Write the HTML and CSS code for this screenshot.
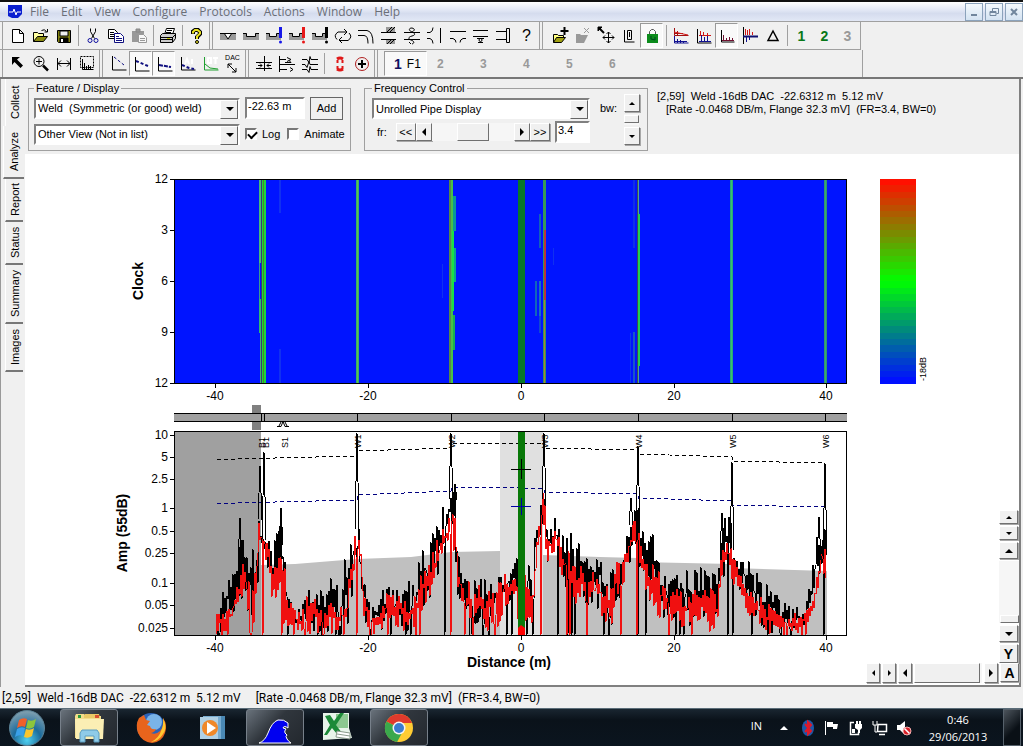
FILE: index.html
```html
<!DOCTYPE html>
<html lang="en">
<head>
    <meta charset="UTF-8">
    <meta name="viewport" content="width=device-width, initial-scale=1.0">
    <title>Pipe Analysis</title>
    <link rel="stylesheet" href="styles.css">
</head>
<body>
    <header class="menubar">
        <svg class="app-icon" viewBox="0 0 14 14"><path d="M0 0h14v9l-4 4H4L0 11z" fill="#0a1fd0"/><path d="M1 7h4l1-3 2 6 1-3h4" stroke="#fff" fill="none"/></svg>
        <nav class="menu">
            <a href="#">File</a>
            <a href="#">Edit</a>
            <a href="#">View</a>
            <a href="#">Configure</a>
            <a href="#">Protocols</a>
            <a href="#">Actions</a>
            <a href="#">Window</a>
            <a href="#">Help</a>
        </nav>
        <div class="window-buttons">
            <button type="button" aria-label="Minimize"><svg viewBox="0 0 16 16"><path d="M5 11h6" stroke-width="2"/></svg></button>
            <button type="button" aria-label="Restore"><svg viewBox="0 0 16 16"><path d="M6.500 7V4.500h6v5h-2M4 7.500h6v4H4zM4 8.500h6"/></svg></button>
            <button type="button" aria-label="Close"><svg viewBox="0 0 16 16"><path d="M5 5l6 6M11 5l-6 6" stroke-width="2"/></svg></button>
        </div>
    </header>

    <div class="toolbars">
        <div class="toolbar">
            <div class="tools tools-first">
                <button type="button" aria-label="New"><svg viewBox="0 0 20 20"><path d="M4.500 3.500h7l4 4v9h-11zM11.500 3.500v4h4" fill="#fff"/></svg></button>
                <button type="button" aria-label="Open"><svg viewBox="0 0 20 20"><path d="M2.500 15.500v-9h4l1 1h5v3" fill="#ffffa0"/><path d="M2.500 15.500l4-5h10l-4 5z" fill="#8a8a10"/><path d="M10.500 4.500q3-2 5 1M16.500 3v3h-3"/></svg></button>
                <button type="button" aria-label="Save"><svg viewBox="0 0 20 20"><path d="M3.500 4.500h13v12h-12l-1-1z" fill="#808010"/><path d="M6 5h8v5H6z" fill="#eee"/><path d="M6 12h8v4H6z" fill="#000"/><path d="M7 13h2v3H7z" fill="#fff" stroke="none"/></svg></button>
                <span class="sep"></span>
                <button type="button" aria-label="Cut"><svg viewBox="0 0 20 20"><path d="M7.500 2.500v3l4 7M12.500 2.500v3l-4 7"/><g stroke="#1010a0"><circle cx="7" cy="14.500" r="2"/><circle cx="13" cy="14.500" r="2"/></g></svg></button>
                <button type="button" aria-label="Copy"><svg viewBox="0 0 20 20"><path d="M2.500 3.500h6l3 3v6h-9z" fill="#fff"/><path d="M4 6.500h4M4 8.500h5M4 10.500h4"/><path d="M8.500 7.500h6l3 3v6h-9z" fill="#fff" stroke="#101080"/><path d="M10 10.500h3M10 12.500h6M10 14.500h6" stroke="#101080"/></svg></button>
                <button type="button" aria-label="Paste" disabled><svg viewBox="0 0 20 20"><path d="M3 5h12v11H3z" fill="#999" stroke="none"/><path d="M7 3h4v3H7z" fill="#999" stroke="#888"/><path d="M9.500 8.500h5l3 3v5h-8z" fill="#f8f8f8" stroke="#999"/><path d="M11 12.500h5M11 14.500h5" stroke="#999"/></svg></button>
                <span class="sep"></span>
                <button type="button" aria-label="Print"><svg viewBox="0 0 20 20"><path d="M6.500 8.500l2-6h8l-2 6z" fill="#fff"/><path d="M9 4.500h5M8 6.500h5"/><path d="M2.500 9.500l2-2h13v5l-3 4h-12z" fill="#ccc"/><path d="M2.500 11.500h12l3-3M2.500 13.500h12M14.500 11v5"/><path d="M9 12.500h3" stroke="#cc0"/></svg></button>
                <span class="sep"></span>
                <button type="button" aria-label="Help"><svg viewBox="0 0 20 20"><path d="M6 8V5.500L8 4h3l2 2v2l-3 3v2" stroke-width="4"/><path d="M6 7.500V6l2-2h2.500L13 6v1.500l-3 3V13" stroke="#e8e020" stroke-width="2"/><circle cx="10" cy="16" r="1.500" fill="#e8e020"/></svg></button>
            </div>
            <div class="tools">
                <button type="button" aria-label="Weld"><svg viewBox="0 0 20 20"><path d="M2 7h16v7H2z" fill="#999" stroke="none"/><path d="M2 7.500h16M6 7l4 6 4-6" fill="#fff"/></svg></button>
                <button type="button" aria-label="Corrosion"><svg viewBox="0 0 20 20"><path d="M2 7h4v4h8V7h4v7H2z" fill="#999" stroke="none"/><path d="M2 7.500h3.500v3h9v-3H18"/></svg></button>
                <button type="button" aria-label="Minor defect"><svg viewBox="0 0 20 20"><path d="M2 7h4v4h7V8h4v6H2z" fill="#999" stroke="none"/><path d="M2 7.500h3.500v3h7v-3h4"/><path d="M16.500 1v11" stroke="#1818e8" stroke-width="3"/><circle cx="16.500" cy="16" r="1.500" fill="#1818e8" stroke="none"/></svg></button>
                <button type="button" aria-label="Major defect"><svg viewBox="0 0 20 20"><path d="M2 7h4v4h7V8h4v6H2z" fill="#999" stroke="none"/><path d="M2 7.500h3.500v3h7v-3h4"/><path d="M16.500 1v11" stroke="#e81818" stroke-width="3"/><circle cx="16.500" cy="16" r="1.500" fill="#e81818" stroke="none"/></svg></button>
                <button type="button" aria-label="Severe defect"><svg viewBox="0 0 20 20"><path d="M2 7h4v4h7V8h4v6H2z" fill="#999" stroke="none"/><path d="M2 7.500h3.500v3h7v-3h4"/><path d="M16.500 1v11" stroke-width="3"/><circle cx="16.500" cy="16" r="1.500" fill="#000" stroke="none"/></svg></button>
                <button type="button" aria-label="Reverberation"><svg viewBox="0 0 20 20"><path d="M4 13.500q-4-4 1-7.500h8M11 3l3 3-3 3M16 7q4 4-1 7.500H7M9 17l-3-3 3-3"/></svg></button>
                <button type="button" aria-label="Bend"><svg viewBox="0 0 20 20"><path d="M2 4.500h9q6 1 6 13M2 9.500h6q4 0 4 8"/></svg></button>
                <button type="button" aria-label="Support"><svg viewBox="0 0 20 20"><path d="M7 1h9v5H7zM7 14h9v4H7z" fill="#999" stroke="none"/><path d="M8 6l5-5M11 6l5-5M8 18l4-4M11 18l4-4M2 6.500h15M2 13.500h15"/></svg></button>
                <button type="button" aria-label="Spiral"><svg viewBox="0 0 20 20"><path d="M2 6.500h16M2 13.500h16M10 2c-4 0-3 3 0 4s4 3 0 4-4 3-1 4 4 3 1 4M10 2c4 1 2 3 0 4M9 18l-2-2"/></svg></button>
                <button type="button" aria-label="Tee"><svg viewBox="0 0 20 20"><path d="M2 6.500h3q3-1 3-5M2 12.500h3q3 1 3 5M15.500 2v15"/></svg></button>
                <button type="button" aria-label="Branch"><svg viewBox="0 0 20 20"><path d="M2 5.500h16M2 12.500h3q3 1 3 4M18 12.500h-3q-3 1-3 4"/></svg></button>
                <button type="button" aria-label="Valve"><svg viewBox="0 0 20 20"><path d="M2 4.500h15M2 10.500h15M6 12.500h7M7 16.500h5"/><circle cx="9.500" cy="14" r="1.500"/></svg></button>
                <button type="button" aria-label="Flange"><svg viewBox="0 0 20 20"><path d="M2 5.500h10M2 13.500h10M12.500 2.500h3v14h-3z"/></svg></button>
                <button type="button" class="glyph plain">?</button>
            </div>
            <div class="tools tools-view">
                <button type="button" aria-label="Add folder"><svg viewBox="0 0 20 20"><path d="M3.500 16.500v-8h4l1 1h5v3" fill="#ffff80"/><path d="M3.500 16.500l3-5h9l-4 5z" fill="#a0a010"/><path d="M14.500 1v8M10.500 5h8" stroke-width="2"/></svg></button>
                <button type="button" aria-label="Remove folder" disabled><svg viewBox="0 0 20 20"><path d="M3 17V8h4l1 1h7l-4 8z" fill="#999" stroke="none"/><path d="M11 2l5 5M16 2l-5 5" stroke="#999"/></svg></button>
                <button type="button" aria-label="Move"><svg viewBox="0 0 20 20"><path d="M2 1h4L2 5z" fill="#000"/><path d="M3 2l5 5" stroke-width="2"/><path d="M12.500 6v11M7 11.500h11M10.500 8l2-2 2 2M10.500 15l2 2 2-2M9 9.500l-2 2 2 2M16 9.500l2 2-2 2"/></svg></button>
                <button type="button" aria-label="Zero"><svg viewBox="0 0 20 20"><path d="M5.500 4v12h10M8.500 4.500h4v9h-4zM10.500 6v5"/></svg></button>
                <button type="button" class="pressed" aria-label="Lock"><svg viewBox="0 0 20 20"><path d="M7.500 8V5.500l2-2h2l2 2V8" stroke="#555"/><path d="M5 8h11v9H5z" fill="#0c8c1c" stroke="none"/><path d="M9 10v3l4 1v-3" stroke="#042"/></svg></button>
                <span class="sep"></span>
                <button type="button" aria-label="Split traces"><svg viewBox="0 0 20 20"><path d="M3.500 2v7.500h14M3 7.500h9M6.500 5v4" stroke="#a01010"/><path d="M3 6l14 3" stroke="#d01818"/><path d="M3.500 10v7h14M6.500 13v4M9.500 14v3M12.500 15v2M4 15.500h12" stroke="#101090"/></svg></button>
                <button type="button" aria-label="Stack traces"><svg viewBox="0 0 20 20"><path d="M3.500 3v14h14"/><path d="M5 9.500h12M6.500 5v4M9.500 6v3M13.500 7v2" stroke="#d01818"/><path d="M5 15.500h12M7.500 9v6M10.500 11v4M13.500 10v5" stroke="#101090"/></svg></button>
                <button type="button" class="pressed" aria-label="Overlay traces"><svg viewBox="0 0 20 20"><path d="M4.500 4v12h13"/><path d="M6.500 9v6M9.500 12v3M12.500 11v4M15.500 12v3M5 14.500h12" stroke="#701030"/></svg></button>
                <button type="button" aria-label="Mirror traces"><svg viewBox="0 0 20 20"><path d="M5.500 3v6M7.500 4v5M9.500 3v6M12.500 6v3" stroke="#d01818"/><path d="M3.500 1v17"/><path d="M3 10.500h15" stroke-width="2" stroke="#101070"/><path d="M6.500 11v5M9.500 11v3" stroke="#101090"/></svg></button>
                <button type="button" aria-label="Delta"><svg viewBox="0 0 20 20"><path d="M10 5l5 9.500H5z" stroke-width="1.500"/></svg></button>
                <span class="sep"></span>
                <button type="button" class="glyph green">1</button>
                <button type="button" class="glyph green">2</button>
                <button type="button" class="glyph" disabled>3</button>
            </div>
        </div>

        <div class="toolbar">
            <div class="tools tools-first">
                <button type="button" aria-label="Select"><svg viewBox="0 0 20 20"><path d="M4 3h8l-3 2.500 6 6-2.500 2.500-6-6L4 11z" fill="#000" stroke="none"/></svg></button>
                <button type="button" aria-label="Zoom"><svg viewBox="0 0 20 20"><circle cx="8" cy="7.500" r="5"/><path d="M8 4.500v6M5 7.500h6"/><path d="M12 11.500l5 5" stroke-width="2.500"/></svg></button>
                <button type="button" aria-label="Distance"><svg viewBox="0 0 20 20"><path d="M3.500 4v12M16.500 4v12M4 9.500h12M7 6.500l-3 3 3 3M13 6.500l3 3-3 3"/></svg></button>
                <button type="button" aria-label="Window region"><svg viewBox="0 0 20 20"><path d="M3.500 2.500h13v11h-13z" stroke-dasharray="2 1"/><path d="M5.500 5v10.500h11M7.500 9v6M9.500 12v3M11.500 11v4M13.500 12v3"/></svg></button>
            </div>
            <div class="tools">
                <button type="button" aria-label="DAC curve"><svg viewBox="0 0 20 20"><path d="M4.500 2v14h14"/><path d="M6 3l10 8" stroke="#101080" stroke-dasharray="3 2"/></svg></button>
                <button type="button" class="pressed" aria-label="Weld curve"><svg viewBox="0 0 20 20"><path d="M4.500 3v14h14"/><path d="M5 7l12 5" stroke="#101080" stroke-width="2" stroke-dasharray="3 2"/></svg></button>
                <button type="button" class="pressed" aria-label="Call curve"><svg viewBox="0 0 20 20"><path d="M4.500 3v14h14"/><path d="M5 11l12 2" stroke="#101080" stroke-width="2" stroke-dasharray="4 1"/></svg></button>
                <button type="button" aria-label="Noise curve"><svg viewBox="0 0 20 20"><path d="M4.500 3v13h14"/><path d="M5 11l7 3 5 1" stroke="#101080" stroke-width="2" stroke-dasharray="3 2"/><path d="M8 10l2-5 2 5M15 5v5" stroke="#fff" stroke-width="2"/></svg></button>
                <button type="button" aria-label="Quick curve"><svg viewBox="0 0 20 20"><path d="M4.500 3v13h14M5 10l5 4 8 1" stroke="#20a030"/><path d="M8 4h3v5H8zM13 4h5M15.500 4v6" stroke="#fff" stroke-width="2"/></svg></button>
                <button type="button" class="dac" aria-label="Set DAC"><span>DAC</span><svg viewBox="0 0 20 12"><path d="M5 2l8 8M5 6V2h4M13 6v4H9"/></svg></button>
            </div>
            <div class="tools">
                <button type="button" aria-label="Centre"><svg viewBox="0 0 20 20"><path d="M2 8.500h16M2 14.500h16M10.500 2v15M4 11.500h4M6 9.500l2 2-2 2M17 11.500h-4M15 9.500l-2 2 2 2"/></svg></button>
                <button type="button" aria-label="Shift"><svg viewBox="0 0 20 20"><path d="M2.500 2v16M2 5.500h7M2 10.500h16M2 15.500h8M8 8.500h6M12 6.500l2 2M13 13.500l3 2-3 2M10 3.500l4 2-4 2"/></svg></button>
                <button type="button" aria-label="Align"><svg viewBox="0 0 20 20"><path d="M2 5.500h5l2 3 1-6 1 3h7M2 10.500h3l2 3 2-6 1 3h8M2 15.500h5l2 3 1-6 1 3h7"/></svg></button>
                <span class="sep"></span>
                <button type="button" aria-label="Ring"><svg viewBox="0 0 20 20"><path d="M8 5q3-2 6 0M8 15q3 2 6 0" stroke="#e01818" stroke-width="3"/><path d="M8.500 6v3M13.500 6v3M8.500 12v3M13.500 12v3" stroke="#e01818" stroke-width="2"/></svg></button>
                <button type="button" aria-label="Target"><svg viewBox="0 0 20 20"><circle cx="10" cy="10" r="6.500" stroke="#b02020"/><path d="M10 6v8M6 10h8" stroke-width="2"/></svg></button>
            </div>
            <div class="tools tools-slots">
                <button type="button" class="slot pressed"><b>1</b> F1</button>
                <button type="button" class="slot" disabled>2</button>
                <button type="button" class="slot" disabled>3</button>
                <button type="button" class="slot" disabled>4</button>
                <button type="button" class="slot" disabled>5</button>
                <button type="button" class="slot" disabled>6</button>
            </div>
        </div>
    </div>

    <main class="workspace">
        <nav class="tabs">
            <button type="button" class="tab tab-collect">Collect</button>
            <button type="button" class="tab tab-analyze active">Analyze</button>
            <button type="button" class="tab">Report</button>
            <button type="button" class="tab">Status</button>
            <button type="button" class="tab tab-summary">Summary</button>
            <button type="button" class="tab">Images</button>
        </nav>

        <div class="panel">
            <form class="controls">
                <fieldset class="group feature">
                    <legend>Feature / Display</legend>
                    <div class="row">
                        <span class="combo"><select aria-label="Feature"><option>Weld&nbsp; (Symmetric (or good) weld)</option></select></span>
                        <input class="field position" type="text" value="-22.63 m" aria-label="Position">
                        <button type="button" class="add">Add</button>
                    </div>
                    <div class="row">
                        <span class="combo"><select aria-label="View"><option>Other View (Not in list)</option></select></span>
                        <label class="check"><input type="checkbox" checked> Log</label>
                        <label class="check"><input type="checkbox"> Animate</label>
                    </div>
                </fieldset>

                <fieldset class="group frequency">
                    <legend>Frequency Control</legend>
                    <div class="frequency-body">
                        <div class="frequency-main">
                            <span class="combo"><select aria-label="Display"><option>Unrolled Pipe Display</option></select></span>
                            <div class="row fr">
                                <label for="fr">fr:</label>
                                <div class="stepper">
                                    <button type="button" class="bevel wide">&lt;&lt;</button>
                                    <button type="button" class="bevel" aria-label="Lower"><i class="arrow left"></i></button>
                                    <input id="fr" class="slider" type="range" min="0" max="100" value="50">
                                    <button type="button" class="bevel" aria-label="Higher"><i class="arrow right"></i></button>
                                    <button type="button" class="bevel wide">&gt;&gt;</button>
                                </div>
                                <input class="field fr-value" type="text" value="3.4" aria-label="Frequency">
                            </div>
                        </div>
                        <label class="bw-label" for="bw">bw:</label>
                        <div class="bw">
                            <button type="button" class="bevel" aria-label="Wider"><i class="arrow up small"></i></button>
                            <input id="bw" class="slider vertical" type="range" min="0" max="100" value="30">
                            <button type="button" class="bevel" aria-label="Narrower"><i class="arrow down small"></i></button>
                        </div>
                    </div>
                </fieldset>

                <div class="readout">
                    <p>[2,59]&nbsp; Weld -16dB DAC&nbsp; -22.6312 m&nbsp; 5.12 mV</p>
                    <p class="rate">[Rate -0.0468 DB/m, Flange 32.3 mV]&nbsp; (FR=3.4, BW=0)</p>
                </div>
            </form>

            <div class="plot">
                <svg class="chart" id="chart" viewBox="25 154 994 530">
                    <!-- unrolled pipe -->
                    <rect x="174" y="179" width="673" height="205" fill="#0014ff"/>
                    <g id="pipeMap" shape-rendering="crispEdges"></g>
                    <path class="axis" d="M174.500 383.500V179.500h672v204z"/>
                    <g id="colorBar" shape-rendering="crispEdges"></g>
                    <text class="tiny" transform="translate(926 381) rotate(-90)">-18dB</text>
                    <text class="title" text-anchor="middle" transform="translate(143 281) rotate(-90)">Clock</text>

                    <!-- pipe strip -->
                    <rect x="252" y="405" width="9" height="25" fill="#808080"/>
                    <rect x="174" y="413" width="673" height="9" fill="#a0a0a0"/>
                    <path class="axis" d="M174 413.500h673M174 421.500h673M261.500 413v9M264.500 413v9M357.500 413v9M451.500 413v9M544.500 413v9M638.500 413v9M732.500 413v9M825.500 413v9"/>
                    <path d="M277 426.500h4l2-5 2 5h4M279 426l2-4M287 426l-2-4" fill="none" stroke="#000"/>

                    <!-- amplitude -->
                    <rect x="174" y="432" width="87" height="203" fill="#a0a0a0"/>
                    <path d="M261 635V565l34-1 62-5 54-2 40-5 49-1v84zM543 635v-80l57 2 38 1v4l94 2v4l95 3v64z" fill="#c0c0c0"/>
                    <rect x="500" y="432" width="43" height="203" fill="#e0e0e0"/>
                    <path class="dac-line" d="M217 459.500l78-2 62-1.500v-5l94-3v-4l93-1v5l94 2v4l94 3v4l93 2"/>
                    <path class="dac-line call" d="M217 503.500l78-2 62-1.500v-5l94-4v-3l49-1 44 2v3l94 2v4l94 3v4l93 2"/>
                    <path id="blackTrace" class="trace"/>
                    <path id="redTrace" class="trace red"/>
                    <path id="peaks" class="trace"/>
                    <rect x="518" y="432" width="7" height="203" fill="#087808"/>
                    <path d="M518 635v-7l3-3 4 3v7z" fill="#f00"/>
                    <path d="M511 469.500h20M521.500 459v20" stroke="#000"/>
                    <path d="M511 506.500h20M521.500 498v17" stroke="#0000a8"/>
                    <path class="axis" d="M174.500 635.500V431.500h672v204z"/>
                    <g id="marks"></g>
                    <g id="scales"></g>
                    <text class="title" text-anchor="middle" transform="translate(127 533) rotate(-90)">Amp (55dB)</text>
                    <text class="title" text-anchor="middle" x="509" y="667">Distance (m)</text>
                </svg>

                <div class="vscroll">
                    <button type="button" class="bevel short" aria-label="Up"><i class="arrow up small"></i></button>
                    <button type="button" class="bevel short" aria-label="Down"><i class="arrow down small"></i></button>
                    <button type="button" class="bevel" aria-label="Scale up"><i class="arrow up"></i></button>
                    <input class="slider vertical" type="range" min="0" max="100" value="100" aria-label="Vertical scale">
                    <button type="button" class="bevel" aria-label="Scale down"><i class="arrow down"></i></button>
                    <button type="button" class="bevel letter">Y</button>
                </div>
                <div class="hscroll">
                    <button type="button" class="bevel" aria-label="Left"><i class="arrow left small"></i></button>
                    <button type="button" class="bevel" aria-label="Right"><i class="arrow right small"></i></button>
                    <button type="button" class="bevel" aria-label="Scroll left"><i class="arrow left"></i></button>
                    <input class="slider" type="range" min="0" max="100" value="0" aria-label="Horizontal scroll">
                    <button type="button" class="bevel" aria-label="Scroll right"><i class="arrow right"></i></button>
                    <button type="button" class="bevel letter">A</button>
                </div>
            </div>
        </div>
    </main>

    <footer class="statusbar">
        <span>[2,59]&nbsp; Weld -16dB DAC&nbsp; -22.6312 m&nbsp; 5.12 mV</span>
        <span>[Rate -0.0468 DB/m, Flange 32.3 mV]&nbsp; (FR=3.4, BW=0)</span>
    </footer>

    <div class="taskbar">
        <button type="button" class="start" aria-label="Start">
            <svg viewBox="0 0 38 38">
                <defs>
                    <radialGradient id="orb" cx=".5" cy=".85" r=".8"><stop offset="0" stop-color="#4fd0f0"/><stop offset=".5" stop-color="#1c6c9c"/><stop offset="1" stop-color="#7a9cae"/></radialGradient>
                </defs>
                <circle cx="19" cy="19" r="17.500" fill="url(#orb)" stroke="#5b8296"/>
                <path d="M11 11q4-3 8-1l-2 8q-4-2-8 1z" fill="#f0602a"/>
                <path d="M20 11q4 2 8-1l-2 8q-4 3-8 1z" fill="#8cc63c"/>
                <path d="M9 20q4-3 8-1l-2 8q-4-2-8 1z" fill="#3aa0e8"/>
                <path d="M18 20q4 2 8-1l-2 8q-4 3-8 1z" fill="#fbc62c"/>
            </svg>
        </button>
        <div class="apps">
            <button type="button" class="app open" aria-label="Explorer">
                <svg viewBox="0 0 34 34"><path d="M3 5l1-2h8l2 2h15v22H3z" fill="#f3dc8a"/><path d="M12 5l1-2h14l1 4H12z" fill="#e9c865"/><path d="M3 8h29l-1 20H4z" fill="#fbeeb4"/><path d="M6 4h3v3H6z" fill="#2a9a3c"/><path d="M23 4h4v3h-4z" fill="#d85030"/><path d="M8 31v-9l2-3h15l2 3v9h-5v-6h-9v6z" fill="#8fcbe8" stroke="#5a9cc0"/></svg>
            </button>
            <button type="button" class="app" aria-label="Firefox">
                <svg viewBox="0 0 34 34"><circle cx="17" cy="16" r="14" fill="#2a62b8"/><circle cx="20" cy="11" r="8" fill="#7ab4e8"/><path d="M5 7q-4 7-1 15 4 9 14 10 10-1 13-10 3-8-2-15 1 9-3 13-4 4-9 2 4-1 5-4-5 1-6-3l-3-1 3-4-4-1-2-5z" fill="#e8641c"/><path d="M29 7q5 10 0 16-4 7-12 8 8-4 10-11 3-6 2-13z" fill="#ffc830"/></svg>
            </button>
            <button type="button" class="app" aria-label="Media Player">
                <svg viewBox="0 0 34 34"><path d="M10 5h19v23H10z" fill="#4a88b4"/><path d="M7 5h18v23H7z" fill="#78acd0"/><path d="M4 6h18v22H4z" fill="#b0d0e4"/><circle cx="14" cy="17" r="8" fill="#f08828"/><path d="M11 11l9 6-9 6z" fill="#fff"/></svg>
            </button>
            <button type="button" class="app open" aria-label="Wave">
                <svg viewBox="0 0 34 34"><path d="M1 32q6-2 9-10 4-11 10-13 6-1 10 3v5q-4-3-5 0l3 1q-2 2-1 4l2 2q-2 1 0 4 2 3 4 4z" fill="#0000f0" stroke="#fff"/></svg>
            </button>
            <button type="button" class="app" aria-label="Excel">
                <svg viewBox="0 0 34 34"><path d="M3 2h26v15l3 10-29 2z" fill="#e8f4ea"/><path d="M16 3h12v14H16z" fill="#8cc890"/><path d="M5 5l5-1 4 6 6-8h4l-8 12 6 8-5 1-5-6-5 7H4l6-10z" fill="#1c8a38"/><path d="M17 20l13 2v6l-14-2zM17 23l13 2" fill="#fff" stroke="#8a9a8c"/></svg>
            </button>
            <button type="button" class="app open" aria-label="Chrome">
                <svg viewBox="0 0 34 34"><circle cx="17" cy="17" r="14" fill="#fc3"/><path d="M17 17L4.500 10.500A14 14 0 0 1 30 12H17z" fill="#e03a2c"/><path d="M17 17l-12.500-6.500A14 14 0 0 0 15 31l5-9z" fill="#3aa84c"/><circle cx="17" cy="17" r="6.500" fill="#f4f4f4"/><circle cx="17" cy="17" r="5" fill="#3a7cd0"/></svg>
            </button>
        </div>
        <div class="tray">
            <span class="lang">IN</span>
            <svg viewBox="0 0 18 18"><path d="M5 11l4-4 4 4z" fill="#fff"/></svg>
            <svg viewBox="0 0 18 18"><ellipse cx="9" cy="9" rx="6" ry="8" fill="#1c58a8"/><path d="M6 5l6 7-3 3V3l3 3-6 7" stroke="#e01828" stroke-width="2" fill="none"/></svg>
            <svg viewBox="0 0 18 18"><path d="M2.500 2v14" stroke="#fff"/><path d="M4 3h6v5H4zM10 5h5l-1 5h-4z" fill="#fff"/></svg>
            <svg viewBox="0 0 18 18"><path d="M7 3.500H3.500v12h8V13" stroke="#fff" stroke-width="1.500" fill="none"/><path d="M8 5h7v4l-2 2v3h-2v-3L8 9zM9 2h2v3H9zM12 2h2v3h-2zM5 10h3v4H5z" fill="#fff"/></svg>
            <svg viewBox="0 0 18 18"><path d="M7 5.500h8.500v7H6.500zM8 15.500h6" stroke="#fff" stroke-width="1.500" fill="none"/><path d="M2 2v4h4V2M4 6v7h2" stroke="#fff" fill="none"/></svg>
            <svg viewBox="0 0 18 18"><path d="M2 6h3l5-4v14l-5-5H2z" fill="#fff"/><circle cx="12" cy="12" r="4" fill="#d82028" stroke="#f4b0b0"/><path d="M9.500 9.500l5 5" stroke="#fff" stroke-width="1.500"/></svg>
        </div>
        <div class="clock"><span>0:46</span><span>29/06/2013</span></div>
        <button type="button" class="show-desktop" aria-label="Show desktop"></button>
    </div>

    <script src="chart.js"></script>
</body>
</html>
```

FILE: styles.css
```css
* {
    box-sizing: border-box;
}
body {
    margin: 0;
    min-height: 100vh;
    display: flex;
    flex-direction: column;
    background: #f0f0f0;
    color: #000;
    font-family: "Liberation Sans", Arial, sans-serif;
    font-size: 11px;
}
button, input, select {
    font: inherit;
    color: inherit;
    margin: 0;
    padding: 0;
}

/* menu */
.menubar {
    display: flex;
    align-items: center;
    height: 22px;
    padding-left: 8px;
    border-top: 2px solid #111;
    border-bottom: 1px solid #a0a0a0;
    background: linear-gradient(#fff, #e4e9f6 40%, #d5dcee 60%, #e2e8f6);
    font-family: "Open Sans", "Noto Sans", sans-serif;
    font-size: 12px;
}
.app-icon {
    width: 14px;
    height: 14px;
    margin-right: 8px;
}
.menu {
    display: flex;
    gap: 12px;
    flex: 1;
}
.menu a {
    color: #6b6f78;
    text-decoration: none;
}
.window-buttons {
    display: flex;
    gap: 2px;
}
.window-buttons button {
    width: 18px;
    height: 18px;
    border: 1px solid #8ba2bb;
    background: linear-gradient(#f4f9fd, #d4e3f2);
}
.window-buttons svg {
    display: block;
    width: 16px;
    height: 16px;
    fill: none;
    stroke: #71869d;
}

/* toolbars */
.toolbars {
    border-bottom: 2px solid #777;
}
.toolbar {
    display: flex;
    width: max-content;
    height: 28px;
    border-bottom: 1px solid #a0a0a0;
}
.toolbar:last-child {
    height: 27px;
    border-bottom: none;
}
.tools {
    display: flex;
    align-items: center;
    padding: 0 1px 0 3px;
    margin-left: 2px;
    border-left: 1px solid #a0a0a0;
    border-right: 1px solid #a0a0a0;
}
.tools-first {
    margin-left: 2px;
}
.tools-view {
    padding-left: 5px;
}
.tools-slots {
    padding: 0 220px 0 6px;
}
.tools button {
    display: flex;
    align-items: center;
    justify-content: center;
    width: 23px;
    height: 25px;
    border: 1px solid transparent;
    background: none;
}
.tools button.pressed {
    border-color: #999 #fff #fff #999;
    background: #f9f9f9;
}
.tools svg {
    flex: none;
    width: 20px;
    height: 20px;
    fill: none;
    stroke: #000;
}
.tools .glyph {
    font-size: 14px;
    font-weight: bold;
}
.tools .plain {
    font-size: 16px;
    font-weight: normal;
}
.tools .green {
    color: #087818;
}
.tools button:disabled {
    color: #999;
}
.tools .slot {
    width: 43px;
    justify-content: flex-start;
    padding-left: 9px;
    gap: 5px;
    font-size: 12px;
}
.tools .slot:disabled {
    font-weight: bold;
}
.slot b {
    color: #101060;
    font-size: 14px;
}
.tools .dac {
    flex-direction: column;
    font-size: 7px;
    line-height: 8px;
}
.tools .dac svg {
    height: 12px;
}
.sep {
    width: 1px;
    height: 21px;
    margin: 0 2px 0 3px;
    background: #a0a0a0;
}

/* side tabs */
.workspace {
    flex: 1;
    display: flex;
    padding-right: 2px;
}
.tabs {
    display: flex;
    flex-direction: column;
    width: 25px;
    padding-left: 1px;
    border-left: 1px solid #999;
}
.tab {
    writing-mode: vertical-rl;
    transform: rotate(180deg);
    width: 18px;
    height: 43px;
    margin-left: 3px;
    border: none;
    border-top: 2px solid #777;
    border-right: 1px solid #fff;
    background: #f0f0f0;
    text-align: center;
}
.tab-collect {
    height: 47px;
    border-top: none;
}
.tab-analyze {
    height: 53px;
}
.tab-summary {
    height: 59px;
}
.tab:last-child {
    height: 48px;
}
.tab.active {
    width: 21px;
    margin-left: 1px;
}

/* controls strip */
.panel {
    flex: 1;
    display: flex;
    flex-direction: column;
    border-right: 2px solid #808080;
    border-bottom: 2px solid #808080;
}
.controls {
    display: flex;
    align-items: flex-start;
    padding: 3px;
}
.group {
    flex: none;
    min-width: 0;
    height: 69px;
    margin: 0;
    padding: 1px 5px 0;
    border: 1px solid #a0a0a0;
}
.group legend {
    padding: 0 2px;
    line-height: 13px;
}
.feature {
    width: 323px;
    margin-right: 13px;
}
.row {
    display: flex;
    align-items: center;
    gap: 5px;
}
.feature .row {
    height: 24px;
    margin-bottom: 2px;
}
.combo {
    position: relative;
    display: block;
    width: 206px;
    height: 21px;
    flex: none;
}
.combo select {
    appearance: none;
    display: block;
    width: 100%;
    height: 100%;
    padding-left: 2px;
    border: 2px solid;
    border-color: #808080 #fff #fff #808080;
    border-radius: 0;
    background: #fff;
}
.combo::before {
    content: "";
    position: absolute;
    right: 2px;
    top: 2px;
    width: 16px;
    height: 17px;
    border: 1px solid;
    border-color: #fff #666 #666 #fff;
    background: #f0f0f0;
    pointer-events: none;
}
.combo::after {
    content: "";
    position: absolute;
    right: 6px;
    top: 9px;
    border: 4px solid transparent;
    border-top-color: #000;
    border-bottom: none;
    pointer-events: none;
}
.field {
    flex: none;
    height: 22px;
    padding: 0 2px 4px 1px;
    border: 2px solid;
    border-color: #808080 #fff #fff #808080;
    background: #fff;
}
.position {
    width: 60px;
}
.add {
    width: 33px;
    height: 23px;
    border: 1px solid #666;
    background: #f0f0f0;
}
.check {
    display: flex;
    align-items: center;
    gap: 5px;
    margin-right: 2px;
}
.check input {
    appearance: none;
    width: 12px;
    height: 12px;
    border: 2px solid;
    border-color: #777 #fff #fff #777;
    background: #fff;
}
.check input:checked::before {
    content: "";
    display: block;
    width: 7px;
    height: 4px;
    margin: 1px;
    border: solid #000;
    border-width: 0 0 2px 2px;
    transform: rotate(-45deg);
}
.frequency {
    width: 284px;
    padding-left: 7px;
}
.frequency-body {
    display: flex;
}
.frequency-main {
    width: 218px;
    padding-top: 2px;
}
.frequency .combo {
    width: 218px;
    margin-bottom: 2px;
}
.fr {
    padding-left: 5px;
}
.stepper {
    display: flex;
    flex: 1;
    min-width: 0;
    margin-left: 4px;
}
.fr-value {
    width: 35px;
}
.bw-label {
    width: 34px;
    padding: 6px 0 0 10px;
}
.bw {
    display: flex;
    flex-direction: column;
    align-items: center;
    gap: 2px;
    width: 15px;
    height: 51px;
    margin-top: -2px;
}
.bevel {
    display: flex;
    align-items: center;
    justify-content: center;
    flex: none;
    width: 16px;
    height: 18px;
    border: 1px solid;
    border-color: #fff #707070 #707070 #fff;
    background: #f0f0f0;
    box-shadow: 1px 1px 0 #a8a8a8;
}
.bevel.wide {
    width: 20px;
}
.arrow {
    border: 4px solid transparent;
}
.arrow.small {
    border-width: 3px;
}
.arrow.left {
    border-right-color: #000;
    border-left: none;
}
.arrow.right {
    border-left-color: #000;
    border-right: none;
}
.arrow.up {
    border-bottom-color: #000;
    border-top: none;
}
.arrow.down {
    border-top-color: #000;
    border-bottom: none;
}
.slider {
    appearance: none;
    flex: 1;
    min-width: 0;
    height: 18px;
    background: #f6f6f6;
}
.slider::-webkit-slider-thumb {
    appearance: none;
    width: 32px;
    height: 18px;
    border: 1px solid;
    border-color: #fff #707070 #707070 #fff;
    background: #f0f0f0;
}
.slider.vertical {
    writing-mode: vertical-lr;
    width: 100%;
    height: auto;
    min-height: 0;
}
.slider.vertical::-webkit-slider-thumb {
    width: 19px;
    height: 8px;
}
.bw .slider.vertical::-webkit-slider-thumb {
    width: 15px;
}
.readout {
    padding: 8px 0 0 9px;
}
.readout p {
    margin: 0;
    line-height: 13px;
}
.readout .rate {
    padding-left: 9px;
}

/* plot */
.plot {
    flex: 1;
    display: grid;
    grid-template-columns: 1fr 20px;
    grid-template-rows: 1fr 22px;
    background: #fff;
}
.chart {
    grid-area: 1 / 1 / 3 / 3;
    display: block;
    width: 100%;
    height: auto;
}
.chart text {
    font-family: "Liberation Sans", Arial, sans-serif;
    font-size: 12px;
}
.chart .title {
    font-size: 14px;
    font-weight: bold;
}
.chart .tiny {
    font-size: 9px;
}
.axis {
    fill: none;
    stroke: #000;
    shape-rendering: crispEdges;
}
.dac-line {
    fill: none;
    stroke: #000;
    stroke-dasharray: 4 3;
    shape-rendering: crispEdges;
}
.dac-line.call {
    stroke: #000080;
}
.trace {
    fill: none;
    stroke: #000;
    stroke-linejoin: bevel;
    shape-rendering: crispEdges;
}
.trace.red {
    stroke: #f01010;
}
.vscroll {
    grid-area: 1 / 2;
    align-self: end;
    display: flex;
    flex-direction: column;
    gap: 2px;
    height: 153px;
}
.vscroll .bevel {
    width: 19px;
    height: 17px;
}
.vscroll .bevel.short {
    height: 14px;
}
.hscroll {
    grid-area: 2 / 1 / 3 / 3;
    justify-self: end;
    display: flex;
    gap: 2px;
    width: 153px;
}
.hscroll .bevel {
    width: 14px;
    height: 20px;
}
.hscroll .slider {
    height: 20px;
}
.hscroll .slider::-webkit-slider-thumb {
    width: 66px;
    height: 20px;
}
.plot .letter {
    width: 19px;
    height: 19px;
    font-size: 14px;
    font-weight: bold;
}

/* status and taskbar */
.statusbar {
    display: flex;
    align-items: center;
    gap: 15px;
    height: 21px;
    padding: 0 2px;
    font-family: Roboto, "Noto Sans", sans-serif;
    font-size: 12px;
}
.taskbar {
    display: flex;
    align-items: stretch;
    height: 38px;
    padding-right: 2px;
    border-top: 1px solid #5a6c78;
    background: linear-gradient(#1a2631, #0a121a 30%, #0b151f);
    color: #fff;
    font-family: "Open Sans", "Noto Sans", sans-serif;
    font-size: 11px;
}
.taskbar button {
    border: none;
    background: none;
}
.start {
    width: 60px;
    padding-left: 8px;
    text-align: left;
}
.start svg {
    display: block;
    width: 38px;
    height: 38px;
}
.apps {
    display: flex;
    gap: 4px;
    flex: 1;
}
.taskbar .app {
    display: flex;
    align-items: center;
    justify-content: center;
    width: 58px;
}
.taskbar .app.open {
    border: 1px solid #77808a;
    border-radius: 3px;
    background: linear-gradient(135deg, #69727b, #30363d 45%, #23282e);
}
.app svg {
    width: 34px;
    height: 34px;
}
.tray {
    display: flex;
    align-items: center;
    gap: 6px;
}
.tray .lang {
    margin: 0 7px 4px 0;
}
.tray svg {
    width: 18px;
    height: 18px;
}
.clock {
    display: flex;
    flex-direction: column;
    align-items: center;
    justify-content: center;
    width: 90px;
    line-height: 17px;
}
.taskbar .show-desktop {
    width: 18px;
    border: 1px solid #56616b;
    background: linear-gradient(135deg, #4c545c, #0a1016 60%);
}
```

FILE: chart.js
```js
const SVG = 'http://www.w3.org/2000/svg';

function add(parent, name, attrs, text) {
    const el = document.createElementNS(SVG, name);
    for (const key in attrs) el.setAttribute(key, attrs[key]);
    if (text !== undefined) el.textContent = text;
    document.getElementById(parent).appendChild(el);
}

// axis scales
[['12', 179], ['3', 230], ['6', 281], ['9', 332], ['12', 383],
 ['10', 435], ['5', 457], ['2.5', 479], ['1', 508], ['0.5', 531],
 ['0.25', 553], ['0.1', 583], ['0.05', 605], ['0.025', 628]].forEach(([label, y]) => {
    add('scales', 'text', { x: 168, y: y + 4, 'text-anchor': 'end' }, label);
    add('scales', 'path', { d: `M170 ${y}.500h4`, class: 'axis' });
});
[['-40', 215], ['-20', 368], ['0', 521], ['20', 674], ['40', 826]].forEach(([label, x]) => {
    [384, 636].forEach(y => {
        add('scales', 'path', { d: `M${x}.500 ${y}v4`, class: 'axis' });
        add('scales', 'text', { x: x, y: y + 16, 'text-anchor': 'middle' }, label);
    });
});
[['B1', 265], ['B1', 269], ['S1', 288], ['W1', 361], ['W2', 455], ['W3', 548],
 ['W4', 642], ['W5', 736], ['W6', 829]].forEach(([label, x]) => {
    add('marks', 'text', { class: 'tiny', transform: `translate(${x} 448) rotate(-90)` }, label);
});

// colour scale, 32 bands
for (let i = 0; i < 32; i++) {
    const t = i / 31 * 2;
    const top = Math.round(179 + i * 6.4);
    const color = t < 1
        ? `rgb(${Math.round(255 * (1 - t))},${Math.round(16 + 239 * t)},0)`
        : `rgb(0,${Math.round(255 - 239 * (t - 1))},${Math.round(255 * (t - 1))})`;
    add('colorBar', 'rect', { x: 880, y: top, width: 36, height: Math.round(179 + (i + 1) * 6.4) - top, fill: color });
}

// reflections on the unrolled pipe: x, y, width, height, colour
[[259, 179, 2, 84, '#46b878'], [259, 263, 1, 36, '#3a9a90'], [259, 299, 2, 34, '#30b870'], [260, 333, 1, 51, '#40b070'],
 [261, 179, 1, 205, '#383878'], [262, 179, 4, 205, '#18d838'], [263, 179, 1, 205, '#508030'],
 [279, 179, 2, 34, '#1030f0'], [279, 349, 2, 34, '#1030f0'],
 [356, 179, 3, 205, '#38b068'], [357, 179, 1, 205, '#60c050'],
 [449, 179, 2, 205, '#588848'], [451, 179, 2, 205, '#48c048'], [453, 196, 3, 35, '#089898'], [453, 248, 3, 34, '#08a888'],
 [452, 231, 2, 80, '#18e048'], [453, 315, 2, 35, '#18b050'], [442, 264, 1, 34, '#1030f0'],
 [518, 179, 7, 205, '#087828'],
 [539, 214, 2, 34, '#1060b8'], [535, 281, 2, 35, '#1068b8'], [539, 281, 2, 35, '#1870c0'], [539, 316, 2, 17, '#1048d0'],
 [543, 179, 3, 205, '#389858'], [544, 230, 2, 70, '#b83838'], [544, 300, 1, 84, '#b08030'],
 [553, 248, 1, 17, '#1030f0'], [633, 179, 2, 69, '#1030e8'],
 [637, 179, 1, 205, '#404858'], [638, 179, 1, 205, '#48a898'], [638, 214, 2, 152, '#20d050'],
 [630, 333, 1, 51, '#1038e8'], [633, 332, 2, 52, '#1858c8'],
 [730, 179, 3, 205, '#28a878'], [731, 179, 1, 205, '#38c070'],
 [824, 179, 3, 205, '#389070'], [825, 179, 1, 205, '#30b070']].forEach(([x, y, width, height, fill]) => {
    add('pipeMap', 'rect', { x, y, width, height, fill });
});

// amplitude envelope: x, black top, red top, bottom
const envelope = [
    [215, 618, 612, 635], [222, 592, 612, 635], [230, 562, 598, 635], [236, 558, 590, 620], [240, 530, 570, 600],
    [245, 536, 558, 600], [250, 545, 575, 635], [255, 530, 545, 635], [259, 505, 515, 580], [263, 530, 525, 550],
    [268, 530, 540, 570], [272, 545, 555, 600], [276, 530, 570, 610], [281, 508, 545, 600], [285, 527, 560, 635],
    [288, 590, 600, 635], [300, 608, 610, 635], [308, 588, 590, 635], [315, 588, 590, 635], [325, 590, 600, 635],
    [333, 571, 600, 635], [340, 560, 605, 635], [347, 553, 585, 635], [353, 530, 545, 590], [357, 500, 516, 550],
    [360, 540, 540, 570], [364, 580, 590, 620], [370, 598, 605, 635], [378, 602, 615, 635], [386, 580, 590, 635],
    [395, 588, 592, 625], [405, 580, 592, 635], [415, 565, 590, 635], [425, 545, 565, 610], [435, 530, 545, 590],
    [443, 505, 525, 560], [448, 500, 510, 560], [451, 480, 490, 530], [455, 485, 490, 560], [458, 550, 560, 600],
    [465, 575, 580, 620], [475, 572, 578, 625], [485, 578, 590, 630], [495, 570, 575, 635], [505, 565, 570, 610],
    [513, 552, 575, 600], [520, 560, 570, 635], [528, 548, 575, 620], [532, 552, 600, 635], [536, 515, 550, 580],
    [541, 495, 495, 540], [544, 485, 490, 530], [548, 530, 530, 570], [552, 520, 530, 560], [556, 515, 520, 555],
    [562, 532, 540, 580], [572, 532, 555, 600], [582, 545, 565, 610], [592, 560, 570, 610], [600, 550, 575, 610],
    [608, 575, 585, 635], [615, 555, 565, 620], [622, 542, 550, 590], [628, 530, 530, 570], [631, 498, 520, 570],
    [635, 494, 520, 550], [638, 500, 520, 550], [641, 520, 530, 580], [645, 523, 560, 590], [652, 530, 560, 610],
    [660, 560, 570, 620], [668, 575, 580, 620], [676, 568, 585, 625], [690, 568, 590, 630], [700, 563, 585, 620],
    [710, 572, 588, 635], [717, 570, 590, 635], [722, 515, 550, 580], [728, 515, 540, 570], [732, 520, 550, 580],
    [735, 545, 560, 590], [742, 550, 575, 600], [753, 565, 590, 625], [765, 580, 600, 635], [778, 592, 612, 635],
    [788, 605, 615, 635], [798, 605, 612, 635], [808, 590, 605, 635], [814, 560, 590, 610], [818, 518, 570, 590],
    [822, 545, 545, 570], [825, 520, 545, 580], [827, 515, 560, 585]
];

let seed = 59;
function random() {
    seed = (seed * 16807) % 2147483647;
    return seed / 2147483647;
}

// swings between the upper and lower half of the envelope
function trace(column, dropout) {
    let d = '';
    let i = 0;
    for (let x = 216; x <= 826; x++) {
        while (envelope[i + 1][0] < x) i++;
        const a = envelope[i];
        const b = envelope[i + 1];
        const t = (x - a[0]) / (b[0] - a[0]);
        const top = a[column] + (b[column] - a[column]) * t;
        const bottom = a[3] + (b[3] - a[3]) * t;
        const swing = x % 2 ? random() * 0.5 : 1 - random() * 0.6;
        let y = top + (bottom - top) * swing;
        if (random() < dropout) y = 635;
        d += (d ? 'L' : 'M') + x + ' ' + Math.round(y);
    }
    return d;
}
document.getElementById('blackTrace').setAttribute('d', trace(1, 0.07));
document.getElementById('redTrace').setAttribute('d', trace(2, 0.04));

// reflector peaks
const peaks = [[240, 518, 560], [260, 466, 520], [264, 452, 540], [281, 508, 545], [357, 433, 530], [451, 433, 500], [455, 484, 500],
               [544, 433, 500], [631, 498, 525], [638, 446, 525], [722, 513, 550], [732, 462, 550], [819, 517, 560], [825, 463, 555]];
document.getElementById('peaks').setAttribute('d',
    peaks.map(([x, top, base]) => `M${x - 2} ${base}L${x} ${top}L${x + 2} ${base}`).join(''));
```
